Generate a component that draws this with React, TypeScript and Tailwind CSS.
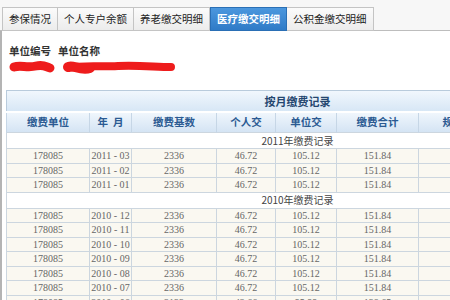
import React from "react";

const tabs = ["参保情况", "个人专户余额", "养老缴交明细", "医疗缴交明细", "公积金缴交明细"];
const activeTab = 3;

const cols = [83, 42, 85, 59, 61, 82, 90, 80];
const heads = ["缴费单位", "年  月", "缴费基数", "个人交", "单位交", "缴费合计", "规定比例", "备注"];

const years = [
  { label: "2011年缴费记录", months: ["03", "02", "01"], year: "2011" },
  { label: "2010年缴费记录", months: ["12", "11", "10", "09", "08", "07"], year: "2010" },
];

const cjk = { fontFamily: '"Noto Sans CJK SC", "Liberation Sans", sans-serif' };
const serif = { fontFamily: '"Liberation Serif", serif' };

const DataRow = ({ values }: { values: string[] }) => (
  <tr className="h-[14.5px] bg-[#faf8f1]">
    {values.map((v, i) => (
      <td
        key={i}
        className="border border-[#ccd6df] p-0 text-center text-[10px] leading-[13px] text-[#666]"
        style={serif}
      >
        {v}
      </td>
    ))}
    <td className="border border-[#ccd6df]" />
    <td className="border border-[#ccd6df]" />
  </tr>
);

export default function App() {
  return (
    <div className="w-[450px] h-[300px] overflow-hidden bg-[#f7f7f7]" style={cjk}>
      <div className="h-[7px]" />
      {/* tab bar */}
      <div className="flex h-[24px] pl-[2px] border-b border-[#bdbdbd]">
        {tabs.map((t, i) => (
          <div
            key={t}
            className={
              i === activeTab
                ? "flex items-center px-[6px] text-[10.5px] font-bold text-white bg-gradient-to-b from-[#4b97de] to-[#2f7bc7] border border-[#2a6fb5] -mb-px"
                : "flex items-center px-[6px] text-[10.5px] text-[#222] bg-gradient-to-b from-[#fbfbfb] to-[#ececec] border border-[#c4c4c4] border-l-0 first:border-l -mb-px"
            }
          >
            {t}
          </div>
        ))}
      </div>

      {/* panel */}
      <div className="h-full bg-white border-l-2 border-[#b4b4b4] pl-[4px] pt-[13px]">
        <div className="flex gap-[7px] pl-[3px] text-[10.5px] font-bold text-[#333] leading-[14px]">
          <span>单位编号</span>
          <span>单位名称</span>
        </div>
        <svg width="180" height="16" className="mt-[1px] block">
          <path d="M8 8 C14 6, 22 9, 30 7 S40 8, 44 9" stroke="#ee1c1c" strokeWidth="9" strokeLinecap="round" fill="none" />
          <path d="M63 9 C74 6, 92 8, 112 7 S150 8, 165 8" stroke="#ee1c1c" strokeWidth="8" strokeLinecap="round" fill="none" />
          <path d="M62 8 C66 5, 74 12, 84 9" stroke="#ee1c1c" strokeWidth="10" strokeLinecap="round" fill="none" />
        </svg>

        <table className="mt-[15px] border-collapse table-fixed w-[582px] border border-[#b9cbdc]">
          <colgroup>
            {cols.map((w, i) => (
              <col key={i} style={{ width: w }} />
            ))}
          </colgroup>
          <tbody>
            <tr className="h-[21px] bg-gradient-to-b from-[#f1f7fd] to-[#d6e6f5]">
              <td colSpan={8} className="text-center text-[11px] font-bold text-[#24466f] border-b-2 border-white">
                按月缴费记录
              </td>
            </tr>
            <tr className="h-[21px] bg-gradient-to-b from-[#f1f7fd] to-[#d3e3f3]">
              {heads.map((h, i) => (
                <td
                  key={i}
                  className="border-x border-[#c6d6e6] text-center text-[10.5px] font-bold text-[#2b5a92] whitespace-pre"
                >
                  {h}
                </td>
              ))}
            </tr>
            {years.map((y) => (
              <React.Fragment key={y.year}>
                <tr className="h-[16px] bg-white">
                  <td colSpan={8} className="border border-[#ccd6df] text-center text-[10px] leading-[12px] text-[#444]">
                    {y.label}
                  </td>
                </tr>
                {y.months.map((m) => (
                  <DataRow key={m} values={["178085", `${y.year} - ${m}`, "2336", "46.72", "105.12", "151.84"]} />
                ))}
              </React.Fragment>
            ))}
            <DataRow values={["178085", "2010 - 06", "2133", "42.66", "95.99", "138.65"]} />
          </tbody>
        </table>
      </div>
    </div>
  );
}
